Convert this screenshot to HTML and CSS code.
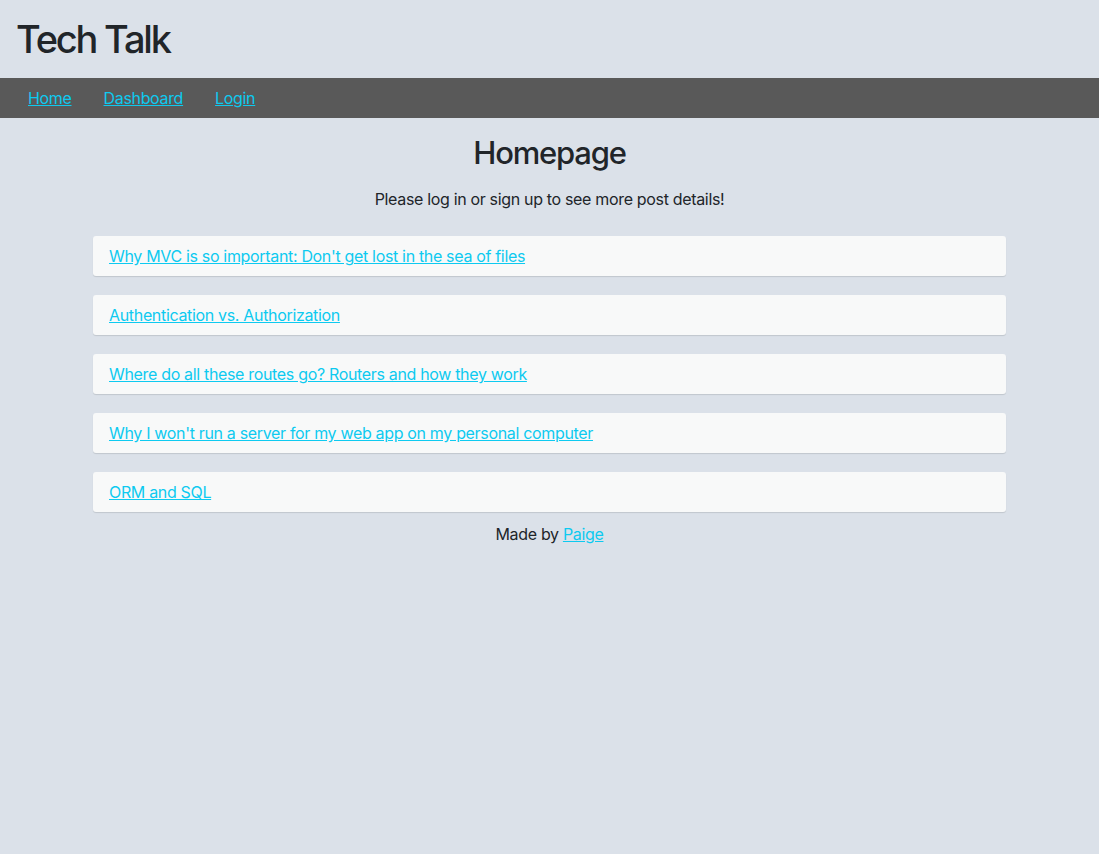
FILE: index.html
```html
<!DOCTYPE html>
<html lang="en">
<head>
<meta charset="utf-8">
<title>Tech Talk</title>
<link rel="stylesheet" href="styles.css">
</head>
<body>
<header class="site-header">
  <h1 class="site-title">Tech Talk</h1>
</header>
<nav class="site-nav">
  <a href="#">Home</a>
  <a href="#">Dashboard</a>
  <a href="#">Login</a>
</nav>
<main class="main">
  <h2 class="page-title">Homepage</h2>
  <p class="intro">Please log in or sign up to see more post details!</p>
  <ul class="posts">
    <li class="post"><a href="#">Why MVC is so important: Don't get lost in the sea of files</a></li>
    <li class="post"><a href="#">Authentication vs. Authorization</a></li>
    <li class="post"><a href="#">Where do all these routes go? Routers and how they work</a></li>
    <li class="post"><a href="#">Why I won't run a server for my web app on my personal computer</a></li>
    <li class="post"><a href="#">ORM and SQL</a></li>
  </ul>
</main>
<footer class="site-footer">Made by <a href="#">Paige</a></footer>
</body>
</html>
```
FILE: styles.css
```css
html, body {
  margin: 0;
  padding: 0;
}
body {
  background: #dbe1e9;
  color: #212529;
  font-family: Inter, "Noto Sans", "Liberation Sans", sans-serif;
  font-size: 16px;
  line-height: 24px;
  letter-spacing: -0.33px;
  min-height: 854px;
}
a {
  color: #0dcaf0;
  text-decoration: underline;
}
.site-header {
  padding: 15px 16px;
}
.site-title {
  margin: 0;
  font-size: 38px;
  line-height: 48px;
  font-weight: 500;
  letter-spacing: -2.2px;
}
.site-nav {
  background: #595959;
  height: 40px;
  display: flex;
  align-items: center;
  padding-left: 12px;
}
.site-nav a {
  padding: 0 16px;
}
.main {
  display: flex;
  flex-direction: column;
  align-items: center;
}
.page-title {
  margin: 16px 0 15px;
  font-size: 31px;
  line-height: 38px;
  font-weight: 500;
  letter-spacing: -1.2px;
}
.intro {
  margin: 0 0 25px;
}
.posts {
  list-style: none;
  margin: 0;
  padding: 0;
  width: 913px;
  display: flex;
  flex-direction: column;
  gap: 19px;
}
.post {
  background: #f8f9f9;
  border-radius: 3px;
  padding: 8px 16px;
  box-shadow: 0 1px 1px rgba(0,0,0,0.12);
}
.site-footer {
  text-align: center;
  margin-top: 10px;
}
```
